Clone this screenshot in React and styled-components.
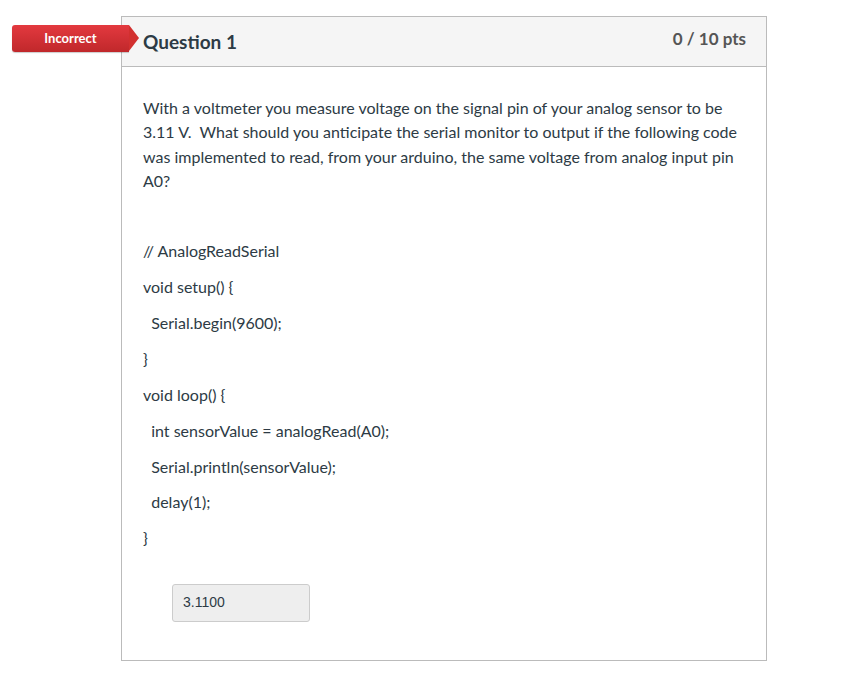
import styled, { createGlobalStyle } from 'styled-components'

const GlobalStyle = createGlobalStyle`
    body {
        margin: 0;
        background: #fff;
        font-family: Lato, "Liberation Sans", sans-serif;
        color: #2d3b45;
    }
`
const Page = styled.div`
    padding: 16px 0 0 121px;
`
const Card = styled.div`
    position: relative;
    width: 644px;
    border: 1px solid #bbb;
`
const Badge = styled.div`
    position: absolute;
    left: -110px;
    top: 8px;
    width: 117px;
    height: 27px;
    padding-bottom: 2px;
    box-sizing: border-box;
    background: linear-gradient(#e3393f, #c0282b);
    border-radius: 3px 0 0 3px;
    color: #fff;
    font-size: 13px;
    font-weight: 700;
    display: flex;
    align-items: center;
    justify-content: center;
    box-shadow: 0 1px 1px rgba(0,0,0,0.2);
    &::after {
        content: "";
        position: absolute;
        right: -10px;
        top: 0;
        border-top: 13.5px solid transparent;
        border-bottom: 13.5px solid transparent;
        border-left: 10px solid #d2302f;
    }
`
const Header = styled.div`
    display: flex;
    align-items: center;
    justify-content: space-between;
    height: 49px;
    padding: 0 20px 0 21px;
    background: #f5f5f5;
    border-bottom: 1px solid #bbb;
`
const Title = styled.h2`
    margin: 0;
    font-size: 19px;
    font-weight: 700;
`
const Points = styled.div`
    font-size: 17px;
    font-weight: 700;
    color: #555;
    padding-bottom: 6px;
`
const Body = styled.div`
    padding: 29px 21px 38px;
    font-size: 16px;
    line-height: 24.3px;
`
const Para = styled.p`
    margin: 0 0 ${props => props.gap || 11.6}px;
`
const Answer = styled.div`
    margin: 33px 0 0 29px;
    width: 126px;
    height: 36px;
    padding-left: 10px;
    display: flex;
    align-items: center;
    background: #eee;
    border: 1px solid #ccc;
    border-radius: 3px;
    font-family: "Liberation Sans", Arial, sans-serif;
    font-size: 14px;
    color: #2d3b45;
`

const code = [
    "// AnalogReadSerial",
    "void setup() {",
    "\u00a0 Serial.begin(9600);",
    "}",
    "void loop() {",
    "\u00a0 int sensorValue = analogRead(A0);",
    "\u00a0 Serial.println(sensorValue);",
    "\u00a0 delay(1);",
    "}",
]

export default function App() {
    return (
        <>
            <GlobalStyle />
            <Page>
                <Card>
                    <Badge>Incorrect</Badge>
                    <Header>
                        <Title>Question 1</Title>
                        <Points>0 / 10 pts</Points>
                    </Header>
                    <Body>
                        <Para gap={46}>
                            With a voltmeter you measure voltage on the signal pin of your analog sensor to be 3.11 V.&nbsp; What should you anticipate the serial monitor to output if the following code was implemented to read, from your arduino, the same voltage from analog input pin A0?
                        </Para>
                        {code.map((line, i) => (
                            <Para key={i}>{line}</Para>
                        ))}
                        <Answer>3.1100</Answer>
                    </Body>
                </Card>
            </Page>
        </>
    )
}
